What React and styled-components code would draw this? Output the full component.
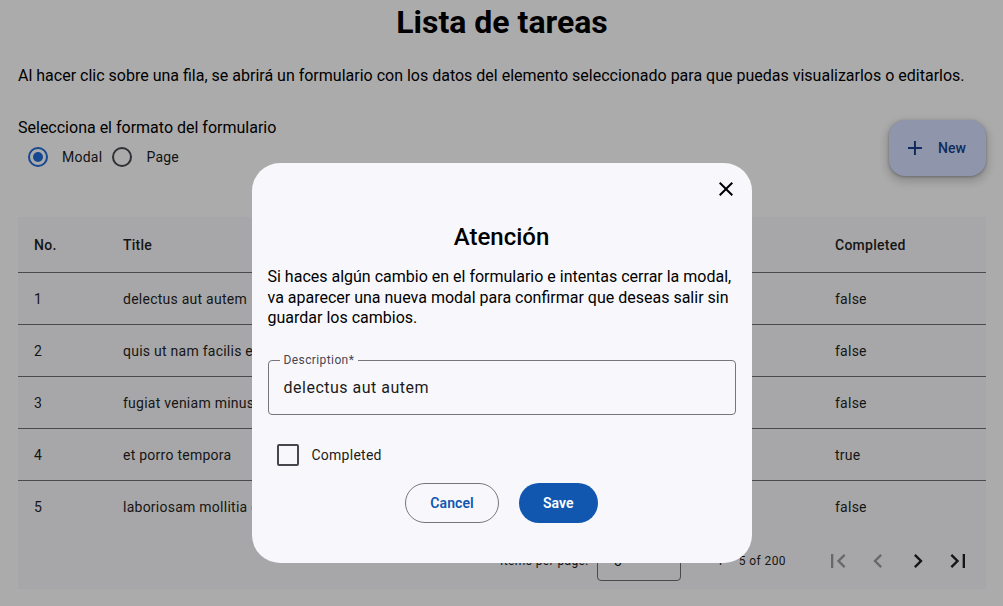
import styled, { createGlobalStyle } from "styled-components";

const GlobalStyle = createGlobalStyle`
  html, body {
    margin: 0;
    padding: 0;
    background: #fdfdfd;
    font-family: Roboto, "Liberation Sans", sans-serif;
    color: #1b1b1f;
  }
  * { box-sizing: border-box; }
`;

const todos = [
  { id: 1, title: "delectus aut autem", user: 1, completed: false },
  { id: 2, title: "quis ut nam facilis et officia qui", user: 1, completed: false },
  { id: 3, title: "fugiat veniam minus", user: 1, completed: false },
  { id: 4, title: "et porro tempora", user: 1, completed: true },
  { id: 5, title: "laboriosam mollitia et enim quasi adipisci quia provident illum", user: 1, completed: false },
];

const Page = styled.div`
  padding: 0 17px 0 18px;
`;

const Title = styled.h1`
  margin: 0;
  height: 44px;
  line-height: 44px;
  text-align: center;
  font-size: 32px;
  font-weight: 700;
  color: #000;
`;

const Intro = styled.p`
  margin: 20px 0 0;
  line-height: 24px;
  font-size: 16px;
  color: #000;
`;

const FormatRow = styled.div`
  display: flex;
  justify-content: space-between;
  align-items: flex-start;
  margin-top: 28px;
`;

const FormatLabel = styled.div`
  font-size: 16px;
  line-height: 24px;
  color: #000;
`;

const RadioGroup = styled.div`
  display: flex;
  align-items: center;
  margin-top: -3px;
`;

const RadioItem = styled.label`
  display: flex;
  align-items: center;
  font-size: 14px;
  letter-spacing: 0.25px;
  color: #1b1b1f;
`;

const RadioTarget = styled.span`
  width: 40px;
  height: 40px;
  display: flex;
  align-items: center;
  justify-content: center;
`;

const RadioCircle = styled.span`
  width: 20px;
  height: 20px;
  border-radius: 50%;
  border: 2px solid ${({ $checked }) => ($checked ? "#2169d6" : "#44474e")};
  display: flex;
  align-items: center;
  justify-content: center;
  &::after {
    content: "";
    width: 10px;
    height: 10px;
    border-radius: 50%;
    background: ${({ $checked }) => ($checked ? "#2169d6" : "transparent")};
  }
`;

const RadioText = styled.span`
  padding-left: 4px;
`;

const Fab = styled.button`
  margin-top: 4px;
  width: 97px;
  height: 56px;
  border: none;
  border-radius: 16px;
  background: #d3ddfd;
  color: #15428c;
  display: flex;
  align-items: center;
  gap: 11px;
  padding: 0 20px 0 14px;
  font-family: inherit;
  font-size: 14px;
  font-weight: 500;
  letter-spacing: 0.1px;
  box-shadow: 0 1px 3px rgba(0, 0, 0, 0.3), 0 4px 8px 3px rgba(0, 0, 0, 0.15);
`;

const TableCard = styled.div`
  margin-top: 40px;
  background: #f7f7fa;
`;

const Row = styled.div`
  display: grid;
  grid-template-columns: 89px 356px 356px 1fr;
  height: ${({ $head }) => ($head ? "56px" : "52px")};
  border-bottom: ${({ $last }) => ($last ? "none" : "1px solid #6d6d70")};
  align-items: center;
`;

const Cell = styled.div`
  padding: 0 16px;
  font-size: 14px;
  font-weight: ${({ $head }) => ($head ? 500 : 400)};
  letter-spacing: 0.25px;
  color: #1f1f23;
  white-space: nowrap;
  overflow: hidden;
  text-overflow: ellipsis;
`;

const Paginator = styled.div`
  height: 56px;
  display: flex;
  align-items: center;
  justify-content: flex-end;
  padding: 0 8px;
  font-size: 12px;
  letter-spacing: 0.4px;
  color: #1f1f23;
`;

const PageSizeLabel = styled.span`
  margin: 0 4px;
`;

const PageSelect = styled.div`
  margin: 0 4px;
  width: 84px;
  height: 40px;
  border: 1px solid #6d6d70;
  border-radius: 4px;
  display: flex;
  align-items: center;
  justify-content: space-between;
  padding: 0 16px 0 16px;
  font-size: 14px;
  &::after {
    content: "";
    border-left: 4px solid transparent;
    border-right: 4px solid transparent;
    border-top: 4px solid #44474e;
  }
`;

const RangeLabel = styled.span`
  margin: 0 32px 0 32px;
`;

const IconButton = styled.button`
  width: 40px;
  height: 40px;
  border: none;
  background: transparent;
  padding: 0;
  display: flex;
  align-items: center;
  justify-content: center;
  color: ${({ disabled }) => (disabled ? "#9a9a9e" : "#1f1f23")};
  svg {
    width: 28px;
    height: 28px;
    fill: currentColor;
  }
`;

const Overlay = styled.div`
  position: fixed;
  inset: 0;
  background: rgba(0, 0, 0, 0.32);
  display: flex;
  justify-content: center;
  align-items: flex-start;
  padding-top: 163px;
`;

const Dialog = styled.div`
  width: 500px;
  height: 400px;
  background: #f8f8fc;
  border-radius: 28px;
  padding: 14px 16px 40px;
  display: flex;
  flex-direction: column;
`;

const CloseRow = styled.div`
  display: flex;
  justify-content: flex-end;
  margin-right: -2px;
  height: 24px;
`;

const CloseButton = styled.button`
  width: 24px;
  height: 24px;
  padding: 0;
  border: none;
  background: transparent;
  color: #000;
  svg {
    width: 24px;
    height: 24px;
    fill: currentColor;
  }
`;

const DialogTitle = styled.h2`
  margin: 20px 0 0;
  line-height: 32px;
  font-size: 24px;
  font-weight: 500;
  text-align: center;
  color: #000;
`;

const DialogText = styled.p`
  margin: 14px 0 0;
  font-size: 16px;
  line-height: 20.5px;
  color: #000;
`;

const Field = styled.div`
  position: relative;
  margin-top: 31px;
  height: 56px;
  border: 1px solid #79747e;
  border-radius: 4px;
  display: flex;
  align-items: center;
  padding: 0 15px;
  font-size: 16px;
  letter-spacing: 0.5px;
  color: #1d1b20;
`;

const FieldLabel = styled.span`
  position: absolute;
  top: -8px;
  left: 11px;
  padding: 0 4px;
  background: #f8f8fc;
  font-size: 12px;
  line-height: 14px;
  letter-spacing: 0.4px;
  color: #49454f;
`;

const CheckRow = styled.label`
  margin-top: 20px;
  height: 40px;
  display: flex;
  align-items: center;
  font-size: 14px;
  letter-spacing: 0.25px;
  color: #1d1b20;
`;

const CheckTarget = styled.span`
  width: 40px;
  height: 40px;
  display: flex;
  align-items: center;
  justify-content: center;
  &::after {
    content: "";
    width: 18px;
    height: 18px;
    border: 2px solid #49454f;
    border-radius: 2px;
  }
`;

const CheckText = styled.span`
  padding-left: 4px;
`;

const Actions = styled.div`
  margin-top: 8px;
  display: flex;
  justify-content: center;
  gap: 20px;
`;

const ActionButton = styled.button`
  height: 40px;
  padding: 0 24px;
  border-radius: 20px;
  border: ${({ $primary }) => ($primary ? "none" : "1px solid #79747e")};
  background: ${({ $primary }) => ($primary ? "#1157b0" : "transparent")};
  color: ${({ $primary }) => ($primary ? "#fff" : "#1157b0")};
  font-family: inherit;
  font-size: 14px;
  font-weight: 600;
  letter-spacing: 0.1px;
`;

const Icon = ({ d }) => (
  <svg viewBox="0 0 24 24" aria-hidden="true">
    <path d={d} />
  </svg>
);

const icons = {
  first: "M18.41 16.59L13.82 12l4.59-4.59L17 6l-6 6 6 6zM6 6h2v12H6z",
  prev: "M15.41 7.41L14 6l-6 6 6 6 1.41-1.41L10.83 12z",
  next: "M10 6L8.59 7.41 13.17 12l-4.58 4.59L10 18l6-6z",
  last: "M5.59 7.41L10.18 12l-4.59 4.59L7 18l6-6-6-6zM16 6h2v12h-2z",
  close:
    "M19 6.41L17.59 5 12 10.59 6.41 5 5 6.41 10.59 12 5 17.59 6.41 19 12 13.41 17.59 19 19 17.59 13.41 12z",
};

export default function App() {
  return (
    <>
      <GlobalStyle />
      <Page>
        <Title>Lista de tareas</Title>
        <Intro>
          Al hacer clic sobre una fila, se abrirá un formulario con los datos del
          elemento seleccionado para que puedas visualizarlos o editarlos.
        </Intro>
        <FormatRow>
          <div>
            <FormatLabel>Selecciona el formato del formulario</FormatLabel>
            <RadioGroup>
              <RadioItem>
                <RadioTarget>
                  <RadioCircle $checked />
                </RadioTarget>
                <RadioText>Modal</RadioText>
              </RadioItem>
              <RadioItem>
                <RadioTarget>
                  <RadioCircle />
                </RadioTarget>
                <RadioText>Page</RadioText>
              </RadioItem>
            </RadioGroup>
          </div>
          <Fab>
            <svg width="24" height="24" viewBox="0 0 24 24" fill="currentColor">
              <path d="M19 13h-6v6h-2v-6H5v-2h6V5h2v6h6v2z" />
            </svg>
            New
          </Fab>
        </FormatRow>

        <TableCard>
          <Row $head>
            <Cell $head>No.</Cell>
            <Cell $head>Title</Cell>
            <Cell $head>User ID</Cell>
            <Cell $head>Completed</Cell>
          </Row>
          {todos.map((t, i) => (
            <Row key={t.id} $last={i === todos.length - 1}>
              <Cell>{t.id}</Cell>
              <Cell>{t.title}</Cell>
              <Cell>{t.user}</Cell>
              <Cell>{String(t.completed)}</Cell>
            </Row>
          ))}
          <Paginator>
            <PageSizeLabel>Items per page:</PageSizeLabel>
            <PageSelect>5</PageSelect>
            <RangeLabel>1 – 5 of 200</RangeLabel>
            <IconButton disabled>
              <Icon d={icons.first} />
            </IconButton>
            <IconButton disabled>
              <Icon d={icons.prev} />
            </IconButton>
            <IconButton>
              <Icon d={icons.next} />
            </IconButton>
            <IconButton>
              <Icon d={icons.last} />
            </IconButton>
          </Paginator>
        </TableCard>
      </Page>

      <Overlay>
        <Dialog>
          <CloseRow>
            <CloseButton aria-label="Cerrar">
              <Icon d={icons.close} />
            </CloseButton>
          </CloseRow>
          <DialogTitle>Atención</DialogTitle>
          <DialogText>
            Si haces algún cambio en el formulario e intentas cerrar la modal, va
            aparecer una nueva modal para confirmar que deseas salir sin guardar
            los cambios.
          </DialogText>
          <Field>
            <FieldLabel>Description*</FieldLabel>
            delectus aut autem
          </Field>
          <CheckRow>
            <CheckTarget />
            <CheckText>Completed</CheckText>
          </CheckRow>
          <Actions>
            <ActionButton>Cancel</ActionButton>
            <ActionButton $primary>Save</ActionButton>
          </Actions>
        </Dialog>
      </Overlay>
    </>
  );
}
